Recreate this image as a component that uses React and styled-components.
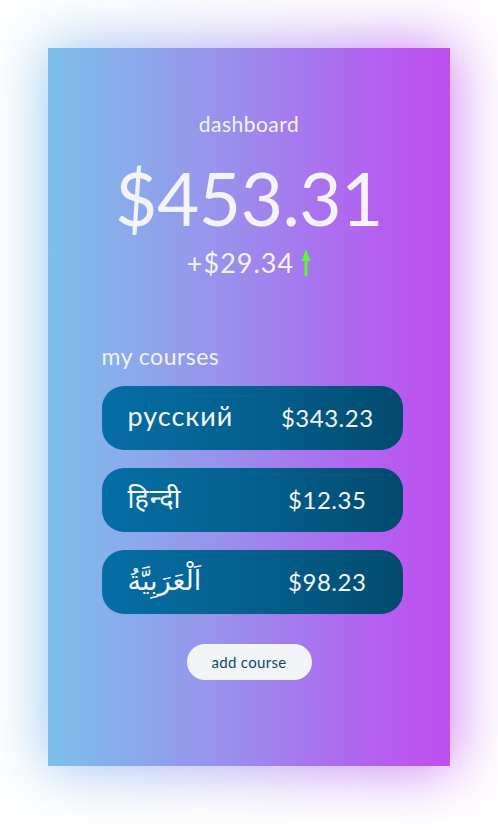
import React from 'react';
import styled, { createGlobalStyle } from "styled-components";

const courses = [
  { name: 'русский', price: '$343.23' },
  { name: 'हिन्दी', price: '$12.35' },
  { name: 'اَلْعَرَبِيَّةُ', price: '$98.23', rtl: true },
];

const App = () => {
  return (
    <Page>
      <Global />
      <Card>
        <Title>dashboard</Title>
        <Total>$453.31</Total>
        <Change>
          +$29.34
          <svg width="10" height="28" viewBox="0 0 10 28">
            <path d="M5 0 L9.5 12 L6.5 12 L6.5 27 L3.5 27 L3.5 12 L0.5 12 Z" fill="#62f23a" />
          </svg>
        </Change>
        <Section>
          <Heading>my courses</Heading>
          <List>
            {courses.map((c) => (
              <Course key={c.price}>
                <Name dir={c.rtl ? 'rtl' : 'ltr'}>{c.name}</Name>
                <Price>{c.price}</Price>
              </Course>
            ))}
          </List>
        </Section>
        <AddButton>add course</AddButton>
      </Card>
    </Page>
  );
};

const Global = createGlobalStyle`
  body {
    margin: 0;
    background: #ffffff;
    font-family: Lato, "Noto Sans", sans-serif;
  }
`;
const Page = styled.div`
  width: 498px;
  height: 830px;
  padding-top: 48px;
  box-sizing: border-box;
  display: flex;
  justify-content: center;
  align-items: flex-start;
  overflow: hidden;
`;
const Card = styled.div`
  position: relative;
  width: 402px;
  height: 718px;
  box-sizing: border-box;
  padding-top: 62px;
  display: flex;
  flex-direction: column;
  align-items: center;
  background: linear-gradient(90deg, #7cc0ea 0%, #9a8fec 45%, #b262ef 80%, #c04ef0 100%);
  color: #f3f3f8;
  &::before {
    content: '';
    position: absolute;
    inset: -4px;
    z-index: -1;
    background: linear-gradient(90deg, #7cc0ea 0%, #9a8fec 45%, #c04ef0 100%);
    filter: blur(30px);
    opacity: 0.75;
  }
`;
const Title = styled.div`
  font-size: 21px;
  letter-spacing: 0.5px;
  line-height: 28px;
`;
const Total = styled.div`
  margin-top: 20px;
  font-size: 73px;
  font-weight: 400;
  line-height: 80px;
  letter-spacing: -0.5px;
`;
const Change = styled.div`
  margin-top: 10px;
  display: flex;
  align-items: center;
  gap: 7px;
  font-size: 27px;
  line-height: 30px;
  letter-spacing: 1px;
`;
const Section = styled.div`
  margin-top: 64px;
  margin-left: 6px;
  width: 301px;
  display: flex;
  flex-direction: column;
`;
const Heading = styled.div`
  font-size: 23px;
  line-height: 28px;
  letter-spacing: 0.5px;
  margin-bottom: 16px;
`;
const List = styled.div`
  display: flex;
  flex-direction: column;
  gap: 18px;
`;
const Course = styled.div`
  height: 64px;
  border-radius: 22px;
  display: grid;
  grid-template-columns: 1fr 1fr;
  align-items: center;
  padding-left: 26px;
  box-sizing: border-box;
  background: linear-gradient(90deg, #066ea6 0%, #045e8b 55%, #034a6e 100%);
  color: #f4f6fa;
`;
const Name = styled.div`
  font-size: 27px;
  letter-spacing: 1px;
  text-align: left;
  justify-self: start;
  margin-top: -6px;
  font-family: Lato, "Noto Sans", "DejaVu Sans", sans-serif;
`;
const Price = styled.div`
  font-size: 24px;
  text-align: center;
  letter-spacing: 0.5px;
  margin-left: -13px;
  margin-top: -2px;
`;
const AddButton = styled.button`
  margin-top: 30px;
  width: 125px;
  height: 36px;
  border: none;
  border-radius: 18px;
  background: #f2f4f7;
  color: #0d4a6c;
  font-family: Lato, "Noto Sans", sans-serif;
  font-size: 15px;
  letter-spacing: 0.3px;
  cursor: pointer;
`;

export default App;
